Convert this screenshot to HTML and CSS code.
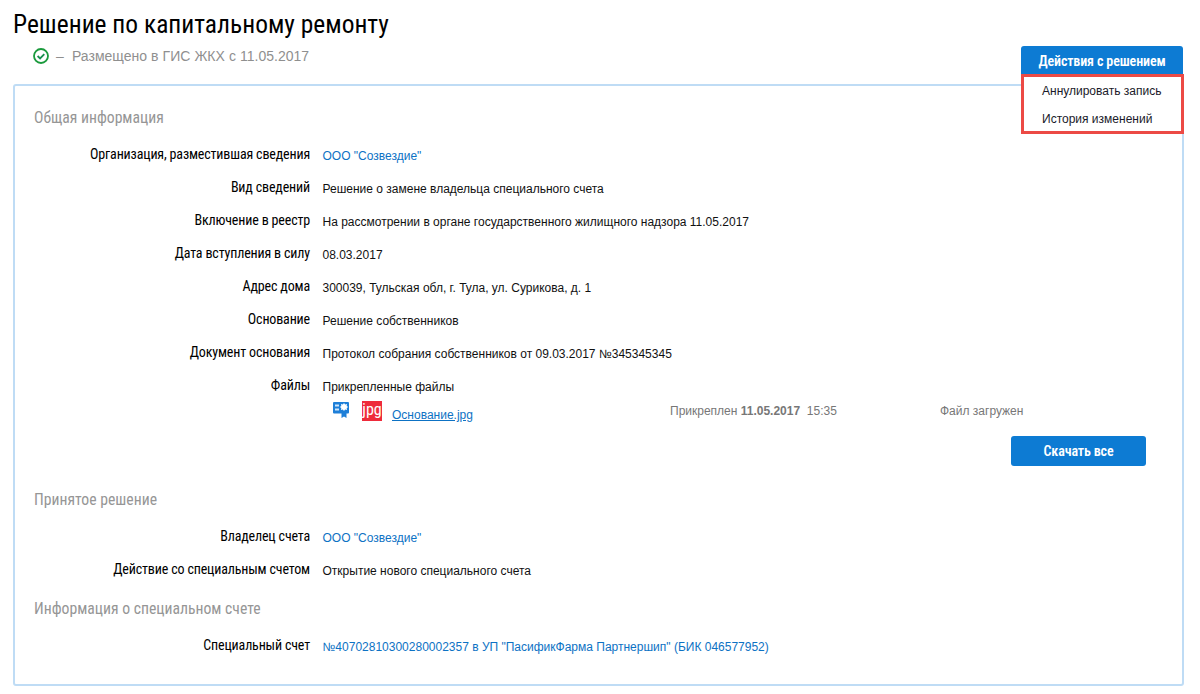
FILE: index.html
```html
<!DOCTYPE html>
<html lang="ru">
<head>
<meta charset="utf-8">
<title>Решение по капитальному ремонту</title>
<link rel="stylesheet" href="styles.css">
</head>
<body>
<header class="head">
  <h1 class="title">Решение по капитальному ремонту</h1>
  <div class="head-row">
    <div class="status">
      <svg class="status-icon" width="16" height="16" viewBox="0 0 16 16"><circle cx="8" cy="8" r="7" fill="none" stroke="#1a9a3c" stroke-width="1.800"/><path d="M4.600 8l2.500 2.500 4.200-4.300" fill="none" stroke="#1a8f50" stroke-width="1.800"/></svg>
      <span class="status-text">–&nbsp; Размещено в ГИС ЖКХ с 11.05.2017</span>
    </div>
    <div class="actions">
      <button class="btn btn-actions">Действия с решением</button>
      <ul class="menu">
        <li>Аннулировать запись</li>
        <li>История изменений</li>
      </ul>
    </div>
  </div>
</header>
<main class="panel">
  <h2 class="section">Общая информация</h2>
  <div class="row"><div class="label">Организация, разместившая сведения</div><div class="value link">ООО "Созвездие"</div></div>
  <div class="row"><div class="label">Вид сведений</div><div class="value">Решение о замене владельца специального счета</div></div>
  <div class="row"><div class="label">Включение в реестр</div><div class="value">На рассмотрении в органе государственного жилищного надзора 11.05.2017</div></div>
  <div class="row"><div class="label">Дата вступления в силу</div><div class="value">08.03.2017</div></div>
  <div class="row"><div class="label">Адрес дома</div><div class="value">300039, Тульская обл, г. Тула, ул. Сурикова, д. 1</div></div>
  <div class="row"><div class="label">Основание</div><div class="value">Решение собственников</div></div>
  <div class="row"><div class="label">Документ основания</div><div class="value">Протокол собрания собственников от 09.03.2017 №345345345</div></div>
  <div class="row row-files"><div class="label">Файлы</div><div class="value">Прикрепленные файлы</div></div>
  <div class="file">
    <svg class="file-sign" width="16" height="16" viewBox="0 0 16 16">
      <rect x="0" y="0" width="16" height="11.500" rx="1" fill="#1e7fd8"/>
      <path d="M2 2.500h4v2h-4zM2 6.500h4v2h-4z" fill="#cfe6fa"/>
      <path d="M11 1l1.100 1.600 1.900-.5-.3 1.900 1.500 1-1.500 1 .3 1.900-1.900-.5-1.100 1.600-1.100-1.600-1.900.5.3-1.900-1.500-1 1.500-1-.3-1.900 1.900.5z" fill="#fff"/>
      <path d="M8.500 11h5v5l-2.500-1.500-2.500 1.500z" fill="#1e7fd8"/>
    </svg>
    <span class="file-type">jpg</span>
    <a class="file-name">Основание.jpg</a>
    <span class="file-date">Прикреплен <b>11.05.2017</b>&nbsp; 15:35</span>
    <span class="file-state">Файл загружен</span>
  </div>
  <div class="download"><button class="btn btn-download">Скачать все</button></div>
  <h2 class="section section-decision">Принятое решение</h2>
  <div class="row"><div class="label">Владелец счета</div><div class="value link">ООО "Созвездие"</div></div>
  <div class="row"><div class="label">Действие со специальным счетом</div><div class="value">Открытие нового специального счета</div></div>
  <h2 class="section section-account">Информация о специальном счете</h2>
  <div class="row"><div class="label">Специальный счет</div><div class="value link">№40702810300280002357 в УП "ПасификФарма Партнершип" (БИК 046577952)</div></div>
</main>
</body>
</html>
```
FILE: styles.css
```css
* { box-sizing: border-box; }
html, body { margin: 0; padding: 0; }
body {
  width: 1200px;
  height: 694px;
  overflow: hidden;
  background: #fff;
  font-family: Roboto, "Liberation Sans", sans-serif;
  color: #111;
}
.head { padding: 11px 16px 0 13px; }
.title {
  margin: 0;
  font-family: Roboto, sans-serif;
  font-stretch: 75%;
  font-weight: 400;
  font-size: 25.45px;
  line-height: 26px;
  color: #000;
}
.head-row {
  display: flex;
  justify-content: space-between;
  align-items: flex-start;
  height: 47px;
  padding-top: 9px;
}
.status {
  display: flex;
  align-items: center;
  gap: 7px;
  padding: 1px 0 0 20px;
  font-family: "Liberation Sans", sans-serif;
  font-size: 14px;
  line-height: 18px;
  word-spacing: .2px;
  color: #8f8f8f;
}
.actions { position: relative; width: 163px; }
.btn {
  display: block;
  border: 0;
  border-radius: 3px;
  background: #0d7bd3;
  color: #fff;
  font-family: Roboto, sans-serif;
  font-stretch: 75%;
  font-weight: 600;
  font-size: 14px;
  letter-spacing: -.13px;
  padding: 0;
}
.btn-actions { width: 162px; height: 29px; border-radius: 3px 3px 0 0; }
.menu {
  position: absolute;
  left: 0;
  top: 28px;
  z-index: 2;
  width: 163px;
  height: 60px;
  margin: 0;
  padding: 0 0 0 18px;
  list-style: none;
  background: #fff;
  border: 3px solid #ec4a45;
  font-family: "Liberation Sans", sans-serif;
  font-size: 12px;
  line-height: 28px;
  color: #1a1a2a;
}
.panel {
  margin: 0 16px 0 13px;
  height: 602px;
  padding: 20px 19px 0;
  border: 2px solid #bfdcf5;
  border-radius: 3px;
}
.section {
  margin: 0 0 11px;
  font-family: Roboto, sans-serif;
  font-stretch: 75%;
  font-weight: 400;
  font-size: 15.7px;
  line-height: 24px;
  color: #969696;
}
.section-decision { margin-top: 22px; }
.section-account { margin-top: 8px; }
.row { display: flex; height: 33px; align-items: flex-start; padding-top: 5px; }
.row-files { height: 28px; }
.label {
  width: 276px;
  margin-top: -1px;
  text-align: right;
  font-family: Roboto, sans-serif;
  font-stretch: 75%;
  font-size: 14px;
  letter-spacing: -.16px;
  line-height: 18px;
  color: #000;
}
.value {
  margin-left: 12.5px;
  margin-top: 1px;
  font-family: "Liberation Sans", sans-serif;
  font-size: 12px;
  line-height: 18px;
  color: #111;
}
.link { color: #0d72c4; }
.file {
  height: 36px;
  font-family: "Liberation Sans", sans-serif;
  font-size: 12px;
  display: flex;
  align-items: flex-start;
}
.file-sign { margin-left: 299px; margin-top: 2px; }
.file-type {
  width: 20px;
  height: 20px;
  margin-top: 1px;
  margin-left: 13px;
  background: #ee2b3b;
  color: #fff;
  font-family: Roboto, sans-serif;
  font-stretch: 75%;
  font-weight: 400;
  font-size: 16px;
  line-height: 17px;
  text-align: center;
}
.file-name {
  width: 278px;
  margin-left: 10px;
  margin-top: 7px;
  line-height: 16px;
  color: #0d72c4;
  text-decoration: underline;
}
.file-date { width: 270px; margin-top: 3px; line-height: 16px; color: #777; }
.file-state { margin-top: 3px; line-height: 16px; color: #777; }
.download { display: flex; justify-content: flex-end; padding-right: 17px; }
.btn-download { width: 135px; height: 30px; }
```
